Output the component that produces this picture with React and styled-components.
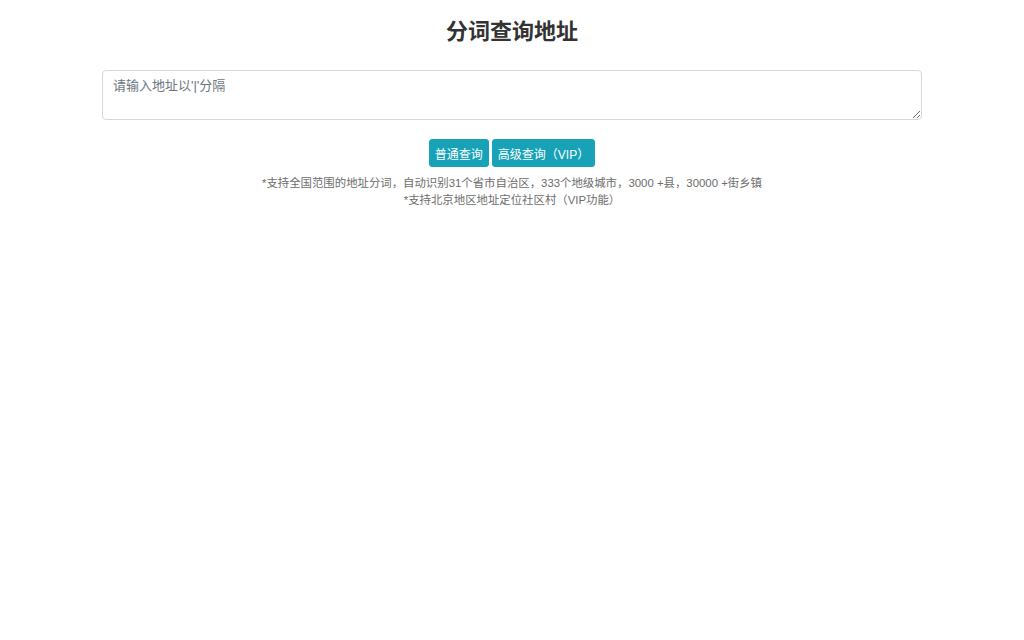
import React, { useState } from "react";
import styled, { createGlobalStyle } from "styled-components";

const GlobalStyle = createGlobalStyle`
  html, body {
    margin: 0;
    padding: 0;
    background: #fff;
    font-family: "Liberation Sans", "Noto Sans CJK SC", sans-serif;
    color: #212529;
  }
`;

const Page = styled.div`
  width: 820px;
  margin: 0 auto;
  padding-top: 17px;
  display: flex;
  flex-direction: column;
  align-items: center;
`;

const Title = styled.h1`
  margin: 0;
  font-size: 22px;
  line-height: 30px;
  font-weight: 700;
  color: #333;
`;

const Entrada = styled.textarea`
  box-sizing: border-box;
  width: 100%;
  height: 50px;
  margin-top: 23px;
  padding: 5px 10px;
  border: 1px solid #d4d8dc;
  border-radius: 4px;
  font-family: inherit;
  font-size: 13px;
  line-height: 19px;
  color: #495057;
  resize: vertical;
  outline: none;
  &::placeholder {
    color: #6c757d;
  }
`;

const Acoes = styled.div`
  display: flex;
  gap: 3px;
  margin-top: 19px;
`;

const Botao = styled.button`
  height: 28px;
  padding: 0 5px;
  border: 1px solid #17a2b8;
  border-radius: 3px;
  background: #17a2b8;
  color: #fff;
  font-family: inherit;
  font-size: 12px;
  cursor: pointer;
  &:hover {
    background: #138496;
  }
`;

const Notas = styled.div`
  margin-top: 8px;
  text-align: center;
  font-size: 11.4px;
  line-height: 17px;
  color: #6c6c6c;
`;

export default function App() {
  const [endereco, setEndereco] = useState("");
  return (
    <>
      <GlobalStyle />
      <Page>
        <Title>分词查询地址</Title>
        <Entrada
          value={endereco}
          onChange={(e) => setEndereco(e.target.value)}
          placeholder="请输入地址以'|'分隔"
        />
        <Acoes>
          <Botao>普通查询</Botao>
          <Botao>高级查询（VIP）</Botao>
        </Acoes>
        <Notas>
          <div>*支持全国范围的地址分词，自动识别31个省市自治区，333个地级城市，3000 +县，30000 +街乡镇</div>
          <div>*支持北京地区地址定位社区村（VIP功能）</div>
        </Notas>
      </Page>
    </>
  );
}
